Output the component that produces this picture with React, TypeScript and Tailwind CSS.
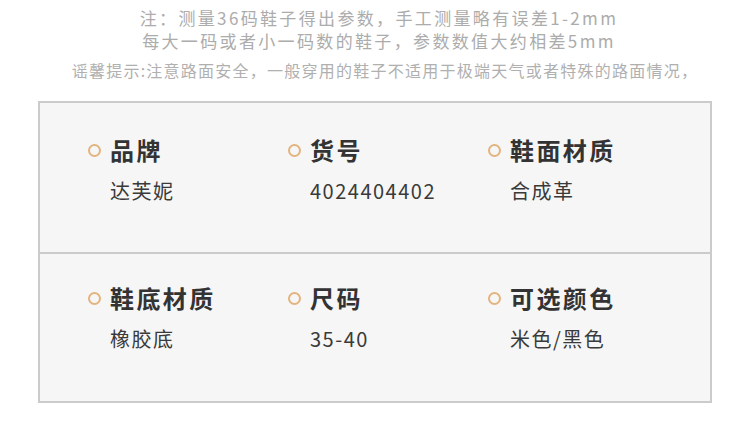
const rows = [
  { cls: "h-[151px] pt-[32px] border-b-2 border-[#cbcbcb]", items: [
    { label: "品牌", value: "达芙妮" },
    { label: "货号", value: "4024404402" },
    { label: "鞋面材质", value: "合成革" },
  ] },
  { cls: "h-[147px] pt-[29px]", items: [
    { label: "鞋底材质", value: "橡胶底" },
    { label: "尺码", value: "35-40" },
    { label: "可选颜色", value: "米色/黑色" },
  ] },
];

const font = { fontFamily: '"Noto Sans CJK SC", "Noto Sans", sans-serif' };

export default function App() {
  return (
    <div className="h-[421px] w-[750px] overflow-hidden bg-white" style={font}>
      <div className="pl-[8px] pt-[6px] text-center text-[17px] leading-[23px] tracking-[2.35px] text-[#acacac]">
        <p>注：测量36码鞋子得出参数，手工测量略有误差1-2mm</p>
        <p>每大一码或者小一码数的鞋子，参数数值大约相差5mm</p>
      </div>
      <p className="mt-[7px] pl-[20px] text-center text-[16px] leading-[22px] tracking-[1.25px] text-[#b0b0b0]">
        谣馨提示:注意路面安全，一般穿用的鞋子不适用于极端天气或者特殊的路面情况，
      </p>

      <div className="ml-[38px] mt-[20px] w-[674px] border-2 border-[#cbcbcb] bg-[#f6f6f6]">
        {rows.map((row, r) => (
          <div key={r} className={`grid grid-cols-[200px_200px_1fr] pl-[48px] ${row.cls}`}>
            {row.items.map((item) => (
              <div key={item.label}>
                <div className="flex items-center">
                  <span className="h-[13px] w-[13px] rounded-full border-2 border-[#e2b47e]" />
                  <span className="ml-[9px] text-[24px] font-bold leading-[30px] tracking-[2.4px] text-[#333]">
                    {item.label}
                  </span>
                </div>
                <p className="mt-[13px] pl-[22px] text-[20px] leading-[26px] tracking-[1.5px] text-[#3a3a3a]">
                  {item.value}
                </p>
              </div>
            ))}
          </div>
        ))}
      </div>
    </div>
  );
}
